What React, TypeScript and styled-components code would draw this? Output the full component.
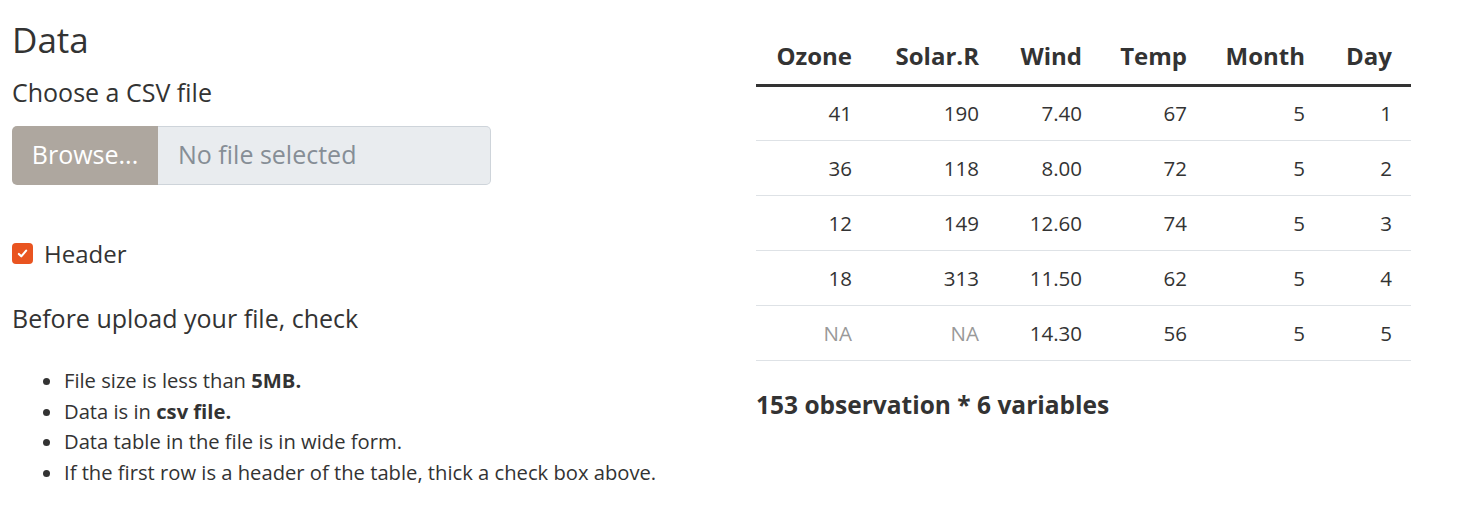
import React from "react";
import styled, { createGlobalStyle } from "styled-components";

const GlobalStyle = createGlobalStyle`
  html, body { margin: 0; padding: 0; background: #fff; }
  body {
    font-family: "Open Sans", "Noto Sans", "DejaVu Sans", sans-serif;
    color: #333;
    -webkit-font-smoothing: antialiased;
  }
  * { box-sizing: border-box; }
`;

const Page = styled.div`
  display: grid;
  grid-template-columns: 732px 655px;
  column-gap: 12px;
  padding: 0 12px;
  width: 1463px;
  height: 511px;
`;

const LeftCol = styled.div`
  display: flex;
  flex-direction: column;
  padding-top: 19px;
`;

const RightCol = styled.div`
  display: flex;
  flex-direction: column;
  padding-top: 30px;
`;

const Title = styled.h3`
  margin: 0;
  font-size: 35px;
  line-height: 42px;
  font-weight: 400;
`;

const FieldLabel = styled.label`
  display: block;
  margin-top: 13px;
  font-size: 25px;
  line-height: 37.5px;
`;

const InputGroup = styled.div`
  display: flex;
  width: 479px;
  height: 59px;
  margin-top: 14px;
`;

const BrowseButton = styled.span`
  display: flex;
  align-items: center;
  justify-content: center;
  width: 146px;
  padding-bottom: 2px;
  background: #aea79f;
  color: #fff;
  font-size: 25px;
  border-radius: 5px 0 0 5px;
`;

const FileField = styled.span`
  flex: 1;
  display: flex;
  align-items: center;
  padding-left: 20px;
  padding-bottom: 2px;
  background: #e9ecef;
  border: 1px solid #ced4da;
  border-left: none;
  border-radius: 0 5px 5px 0;
  color: #868e96;
  font-size: 25px;
`;

const CheckRow = styled.label`
  display: flex;
  align-items: center;
  gap: 11px;
  margin-top: 51px;
  height: 36px;
  font-size: 24px;
`;

const CheckBox = styled.span`
  display: flex;
  align-items: center;
  justify-content: center;
  width: 21px;
  height: 21px;
  border-radius: 4px;
  background: #e95420;
`;

const SectionText = styled.p`
  margin: 28px 0 0;
  font-size: 25px;
  line-height: 37.5px;
`;

const Notes = styled.ul`
  margin: 28px 0 0;
  padding-left: 52px;
  font-size: 20.2px;
  line-height: 30.7px;
`;

const Table = styled.table`
  width: 655px;
  border-collapse: collapse;
  table-layout: fixed;
`;

const HeadCell = styled.th<{ $w: number; $pr?: number }>`
  width: ${(p) => p.$w}px;
  height: 55px;
  padding: 0 ${(p) => p.$pr ?? 20}px 2px 0;
  text-align: right;
  font-size: 24px;
  font-weight: 700;
  border-bottom: 3px solid #333;
`;

const BodyRow = styled.tr`
  border-bottom: 1px solid #dee2e6;
`;

const Cell = styled.td<{ $na?: boolean; $pr?: number }>`
  height: 55px;
  padding: 0 ${(p) => p.$pr ?? 20}px 0 0;
  text-align: right;
  font-size: 20.5px;
  color: ${(p) => (p.$na ? "#999" : "#333")};
`;

const Summary = styled.h5`
  margin: 29px 0 0;
  font-size: 24.5px;
  line-height: 30px;
  font-weight: 700;
`;

const columns = [
  { name: "Ozone", w: 116 },
  { name: "Solar.R", w: 127 },
  { name: "Wind", w: 103 },
  { name: "Temp", w: 105 },
  { name: "Month", w: 118 },
  { name: "Day", w: 86, pr: 19 },
];

const rows: (string | null)[][] = [
  ["41", "190", "7.40", "67", "5", "1"],
  ["36", "118", "8.00", "72", "5", "2"],
  ["12", "149", "12.60", "74", "5", "3"],
  ["18", "313", "11.50", "62", "5", "4"],
  [null, null, "14.30", "56", "5", "5"],
];

export default function App() {
  return (
    <>
      <GlobalStyle />
      <Page>
        <LeftCol>
          <Title>Data</Title>
          <FieldLabel>Choose a CSV file</FieldLabel>
          <InputGroup>
            <BrowseButton>Browse...</BrowseButton>
            <FileField>No file selected</FileField>
          </InputGroup>
          <CheckRow>
            <CheckBox>
              <svg width="13" height="13" viewBox="0 0 16 16">
                <path
                  d="M3.5 8.5 L6.5 11.5 L12.5 4.5"
                  fill="none"
                  stroke="#fff"
                  strokeWidth="2.6"
                  strokeLinecap="round"
                  strokeLinejoin="round"
                />
              </svg>
            </CheckBox>
            Header
          </CheckRow>
          <SectionText>Before upload your file, check</SectionText>
          <Notes>
            <li>
              File size is less than <b>5MB.</b>
            </li>
            <li>
              Data is in <b>csv file.</b>
            </li>
            <li>Data table in the file is in wide form.</li>
            <li>If the first row is a header of the table, thick a check box above.</li>
          </Notes>
        </LeftCol>
        <RightCol>
          <Table>
            <thead>
              <tr>
                {columns.map((c) => (
                  <HeadCell key={c.name} $w={c.w} $pr={c.pr}>
                    {c.name}
                  </HeadCell>
                ))}
              </tr>
            </thead>
            <tbody>
              {rows.map((r, i) => (
                <BodyRow key={i}>
                  {r.map((v, j) => (
                    <Cell key={j} $na={v === null} $pr={columns[j].pr}>
                      {v === null ? "NA" : v}
                    </Cell>
                  ))}
                </BodyRow>
              ))}
            </tbody>
          </Table>
          <Summary>153 observation * 6 variables</Summary>
        </RightCol>
      </Page>
    </>
  );
}
